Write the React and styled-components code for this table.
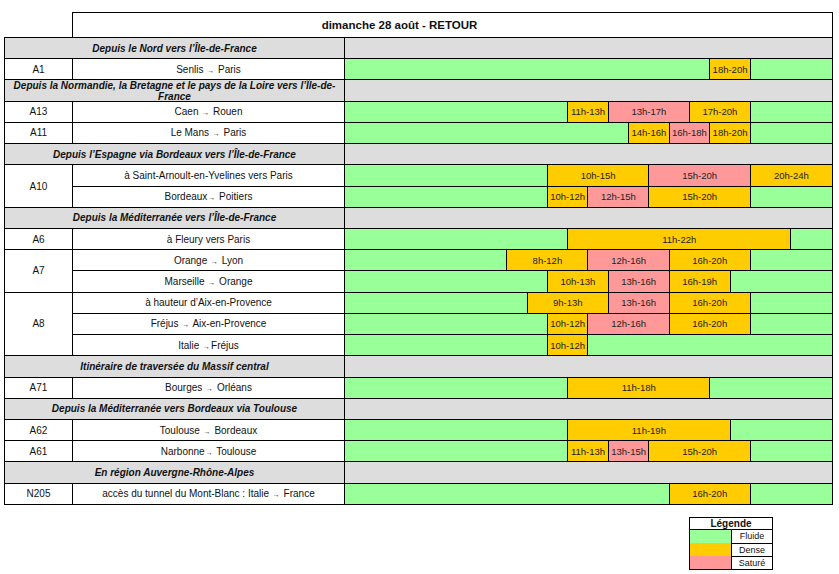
import React from 'react'
import styled, { createGlobalStyle } from 'styled-components'

const COLORS = {
  fluide: '#99ff99',
  dense: '#ffcc00',
  sature: '#ff9999',
}

const D = 'dense'
const S = 'sature'

const sections = [
  {
    title: 'Depuis le Nord vers l’Île-de-France',
    groups: [{ code: 'A1', routes: [{ name: 'Senlis → Paris', spans: [[18, 20, D]] }] }],
  },
  {
    title: 'Depuis la Normandie, la Bretagne et le pays de la Loire vers l’Île-de-France',
    groups: [
      { code: 'A13', routes: [{ name: 'Caen → Rouen', spans: [[11, 13, D], [13, 17, S], [17, 20, D]] }] },
      { code: 'A11', routes: [{ name: 'Le Mans → Paris', spans: [[14, 16, D], [16, 18, S], [18, 20, D]] }] },
    ],
  },
  {
    title: 'Depuis l’Espagne via Bordeaux vers l’Île-de-France',
    groups: [
      {
        code: 'A10',
        routes: [
          { name: 'à Saint-Arnoult-en-Yvelines vers Paris', spans: [[10, 15, D], [15, 20, S], [20, 24, D]] },
          { name: 'Bordeaux→ Poitiers', spans: [[10, 12, D], [12, 15, S], [15, 20, D]] },
        ],
      },
    ],
  },
  {
    title: 'Depuis la Méditerranée vers l’Île-de-France',
    groups: [
      { code: 'A6', routes: [{ name: 'à Fleury vers Paris', spans: [[11, 22, D]] }] },
      {
        code: 'A7',
        routes: [
          { name: 'Orange → Lyon', spans: [[8, 12, D], [12, 16, S], [16, 20, D]] },
          { name: 'Marseille → Orange', spans: [[10, 13, D], [13, 16, S], [16, 19, D]] },
        ],
      },
      {
        code: 'A8',
        routes: [
          { name: 'à hauteur d’Aix-en-Provence', spans: [[9, 13, D], [13, 16, S], [16, 20, D]] },
          { name: 'Fréjus → Aix-en-Provence', spans: [[10, 12, D], [12, 16, S], [16, 20, D]] },
          { name: 'Italie →Fréjus', spans: [[10, 12, D]] },
        ],
      },
    ],
  },
  {
    title: 'Itinéraire de traversée du Massif central',
    groups: [{ code: 'A71', routes: [{ name: 'Bourges → Orléans', spans: [[11, 18, D]] }] }],
  },
  {
    title: 'Depuis la Méditerranée vers Bordeaux via Toulouse',
    groups: [
      { code: 'A62', routes: [{ name: 'Toulouse → Bordeaux', spans: [[11, 19, D]] }] },
      { code: 'A61', routes: [{ name: 'Narbonne→ Toulouse', spans: [[11, 13, D], [13, 15, S], [15, 20, D]] }] },
    ],
  },
  {
    title: 'En région Auvergne-Rhône-Alpes',
    groups: [
      { code: 'N205', routes: [{ name: 'accès du tunnel du Mont-Blanc : Italie → France', spans: [[16, 20, D]] }] },
    ],
  },
]

// fills the gaps between spans with "fluide"
const fillDay = (spans) => {
  const out = []
  let h = 0
  spans.forEach(([from, to, level]) => {
    if (from > h) out.push({ from: h, to: from, level: 'fluide' })
    out.push({ from, to, level })
    h = to
  })
  if (h < 24) out.push({ from: h, to: 24, level: 'fluide' })
  return out
}

const RouteName = ({ name }) => {
  const parts = name.split('→')
  if (parts.length < 2) return name
  return (
    <>
      {parts[0]}
      <Arrow>→</Arrow>
      {parts[1]}
    </>
  )
}

const App = () => {
  return (
    <Page>
      <GlobalStyle />
      <TitleBar>dimanche 28 août - RETOUR</TitleBar>
      <Table>
        {sections.map((sec) => (
          <React.Fragment key={sec.title}>
            <SectionRow>
              <SectionLabel>{sec.title}</SectionLabel>
              <SectionFill />
            </SectionRow>
            {sec.groups.map((g) => (
              <Group key={g.code}>
                <CodeCell>{g.code}</CodeCell>
                <RouteStack>
                  {g.routes.map((r) => (
                    <RouteRow key={r.name}>
                      <RouteCell>
                        <RouteName name={r.name} />
                      </RouteCell>
                      <Timeline>
                        {fillDay(r.spans).map((s) => (
                          <Slot key={s.from} $from={s.from} $to={s.to} $level={s.level}>
                            {s.level !== 'fluide' && `${s.from}h-${s.to}h`}
                          </Slot>
                        ))}
                      </Timeline>
                    </RouteRow>
                  ))}
                </RouteStack>
              </Group>
            ))}
          </React.Fragment>
        ))}
      </Table>
      <LegendWrap>
        <Legend>
          <LegendTitle>Légende</LegendTitle>
          <LegendRow>
            <Swatch $level="fluide" />
            <LegendLabel>Fluide</LegendLabel>
          </LegendRow>
          <LegendRow>
            <Swatch $level="dense" />
            <LegendLabel>Dense</LegendLabel>
          </LegendRow>
          <LegendRow>
            <Swatch $level="sature" />
            <LegendLabel>Saturé</LegendLabel>
          </LegendRow>
        </Legend>
      </LegendWrap>
    </Page>
  )
}

export default App

const GlobalStyle = createGlobalStyle`
  body {
    margin: 0;
    background: #fff;
    color: #111;
    font-family: "Liberation Sans", Arial, sans-serif;
  }
  * { box-sizing: border-box; }
`

const ROW_H = '21.23px'

const Page = styled.div`
  padding: 12px 0 0 4px;
  width: 833px;
`

const TitleBar = styled.div`
  margin-left: 68px;
  height: 25px;
  border: 1px solid #000;
  border-bottom: none;
  display: flex;
  align-items: center;
  justify-content: center;
  padding-right: 106px;
  font-size: 11.5px;
  font-weight: bold;
`

const Table = styled.div`
  width: 829px;
  border-top: 1px solid #000;
  border-left: 1px solid #000;
  font-size: 10px;
`

const SectionRow = styled.div`
  display: flex;
  height: ${ROW_H};
  background: #dddddd;
`

const SectionLabel = styled.div`
  width: 340px;
  border-right: 1px solid #000;
  border-bottom: 1px solid #000;
  display: flex;
  align-items: center;
  justify-content: center;
  text-align: center;
  padding: 0 4px;
  font-weight: bold;
  font-style: italic;
  line-height: 11px;
`

const SectionFill = styled.div`
  width: 488px;
  border-right: 1px solid #000;
  border-bottom: 1px solid #000;
`

const Group = styled.div`
  display: flex;
`

const CodeCell = styled.div`
  width: 68px;
  border-right: 1px solid #000;
  border-bottom: 1px solid #000;
  display: flex;
  align-items: center;
  justify-content: center;
`

const RouteStack = styled.div`
  display: flex;
  flex-direction: column;
`

const RouteRow = styled.div`
  display: flex;
  height: ${ROW_H};
`

const RouteCell = styled.div`
  width: 272px;
  border-right: 1px solid #000;
  border-bottom: 1px solid #000;
  display: flex;
  align-items: center;
  justify-content: center;
  white-space: pre;
`

const Arrow = styled.span`
  font-size: 7px;
  position: relative;
  top: 1px;
  padding: 0 1px;
`

const Timeline = styled.div`
  width: 488px;
  border-right: 1px solid #000;
  border-bottom: 1px solid #000;
  display: grid;
  grid-template-columns: repeat(24, 1fr);
`

const Slot = styled.div`
  grid-column: ${(p) => p.$from + 1} / ${(p) => p.$to + 1};
  background: ${(p) => COLORS[p.$level]};
  border-right: 1px solid #000;
  display: flex;
  align-items: center;
  justify-content: center;
  font-size: 9.5px;
  white-space: nowrap;
  color: #222;

  &:last-child {
    border-right: none;
  }
`

const LegendWrap = styled.div`
  display: flex;
  justify-content: flex-end;
  margin-top: 12px;
  padding-right: 60px;
`

const Legend = styled.div`
  width: 84px;
  border: 1px solid #000;
  font-size: 9px;
`

const LegendTitle = styled.div`
  height: 12px;
  border-bottom: 1px solid #000;
  text-align: center;
  font-size: 10px;
  font-weight: bold;
  line-height: 11px;
`

const Swatch = styled.div`
  width: 41px;
  background: ${(p) => COLORS[p.$level]};
`

const LegendLabel = styled.div`
  flex: 1;
  border-left: 1px solid #000;
  display: flex;
  align-items: center;
  justify-content: center;
`

const LegendRow = styled.div`
  display: flex;
  height: 13px;

  & + & ${LegendLabel} {
    border-top: 1px solid #000;
  }
`
